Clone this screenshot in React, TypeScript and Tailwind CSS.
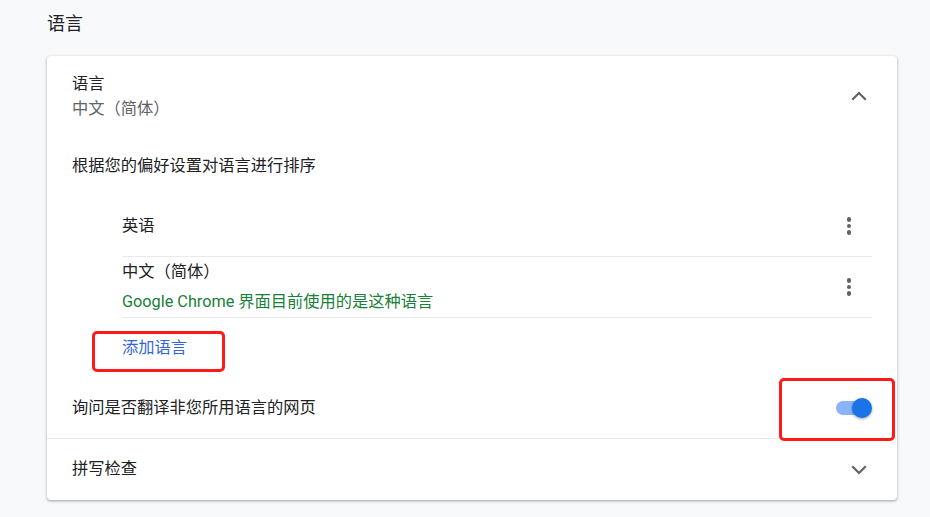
import React from 'react'

function Kebab() {
  return (
    <div className="flex w-[24px] flex-col items-center gap-[2px]">
      <span className="h-[4.5px] w-[4.5px] rounded-full bg-[#5f6368]" />
      <span className="h-[4.5px] w-[4.5px] rounded-full bg-[#5f6368]" />
      <span className="h-[4.5px] w-[4.5px] rounded-full bg-[#5f6368]" />
    </div>
  )
}

function Chevron({ up = false }: { up?: boolean }) {
  return (
    <svg width="24" height="24" viewBox="0 0 24 24" className="text-[#5f6368]">
      <path
        d={up ? 'M6 15l6-6 6 6' : 'M6 9l6 6 6-6'}
        fill="none"
        stroke="currentColor"
        strokeWidth="2.2"
        strokeLinecap="square"
      />
    </svg>
  )
}

function Toggle() {
  return (
    <div className="relative h-[20px] w-[38px]">
      <div className="absolute left-[2px] top-[3px] h-[14px] w-[34px] rounded-full bg-[#8ab4f8]" />
      <div className="absolute right-0 top-0 h-[20px] w-[20px] rounded-full bg-[#1a73e8] shadow-[0_1px_3px_rgba(0,0,0,0.4)]" />
    </div>
  )
}

export default function App() {
  return (
    <div
      className="min-h-[517px] w-[930px] bg-[#f8f9fa] pl-[47px] text-[16.25px] text-[#202124]"
      style={{ fontFamily: 'Roboto, "Noto Sans CJK SC", sans-serif' }}
    >
      <div className="h-[56px] pt-[11px] text-[18px] leading-[26px] text-[#202124]">语言</div>

      <div className="w-[850px] rounded-[4px] bg-white shadow-[0_1px_2px_rgba(60,64,67,0.3),0_1px_3px_1px_rgba(60,64,67,0.15)]">
        <div className="flex h-[80px] items-center justify-between pl-[25px] pr-[26px]">
          <div className="leading-[25px]">
            <div>语言</div>
            <div className="text-[#5f6368]">中文（简体）</div>
          </div>
          <Chevron up />
        </div>

        <div className="flex h-[60px] items-center pl-[25px]">根据您的偏好设置对语言进行排序</div>

        <div className="pl-[75px] pr-[25px]">
          <div className="flex h-[61px] items-center justify-between border-b border-[#e8eaed] pr-[11px]">
            <span>英语</span>
            <Kebab />
          </div>
          <div className="flex h-[61px] items-center justify-between border-b border-[#e8eaed] pr-[11px]">
            <div className="leading-[30px]">
              <div>中文（简体）</div>
              <div className="text-[#188038]">Google Chrome 界面目前使用的是这种语言</div>
            </div>
            <Kebab />
          </div>
        </div>

        <div className="relative flex h-[60px] items-center pl-[75px]">
          <span className="text-[#3367d6]">添加语言</span>
          <div className="absolute left-[45px] top-[13px] h-[41px] w-[133px] rounded-[5px] border-[3px] border-[#ff1a1a]" />
        </div>

        <div className="relative flex h-[61px] items-center justify-between border-b border-[#e8eaed] pl-[25px] pr-[25px]">
          <span>询问是否翻译非您所用语言的网页</span>
          <Toggle />
          <div className="absolute left-[732px] top-[0px] h-[63px] w-[116px] rounded-[5px] border-[3px] border-[#ff1a1a]" />
        </div>

        <div className="flex h-[61px] items-center justify-between pl-[25px] pr-[26px]">
          <span>拼写检查</span>
          <Chevron />
        </div>
      </div>
    </div>
  )
}
